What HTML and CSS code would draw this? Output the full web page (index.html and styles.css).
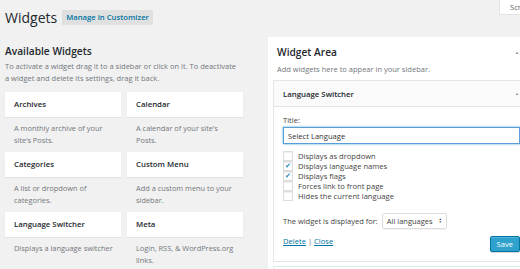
FILE: index.html
```html
<!DOCTYPE html>
<html>
<head>
<meta charset="utf-8">
<link rel="stylesheet" href="styles.css">
</head>
<body>
<div class="page">
  <header class="topbar">
    <h1 class="page-title">Widgets</h1>
    <a class="title-action" href="#">Manage in Customizer</a>
    <button class="screen-opts">Screen Options</button>
  </header>
  <div class="columns">
    <section class="available">
      <h2 class="section-title">Available Widgets</h2>
      <p class="section-desc">To activate a widget drag it to a sidebar or click on it. To deactivate a widget and delete its settings, drag it back.</p>
      <div class="widget-grid">
        <div class="widget-item"><div class="widget-card">Archives</div><p class="widget-desc">A monthly archive of your site’s Posts.</p></div>
        <div class="widget-item"><div class="widget-card">Calendar</div><p class="widget-desc">A calendar of your site’s Posts.</p></div>
        <div class="widget-item"><div class="widget-card">Categories</div><p class="widget-desc">A list or dropdown of categories.</p></div>
        <div class="widget-item"><div class="widget-card">Custom Menu</div><p class="widget-desc">Add a custom menu to your sidebar.</p></div>
        <div class="widget-item"><div class="widget-card">Language Switcher</div><p class="widget-desc">Displays a language switcher</p></div>
        <div class="widget-item"><div class="widget-card">Meta</div><p class="widget-desc">Login, RSS, &amp; WordPress.org links.</p></div>
      </div>
    </section>
    <section class="sidebar">
      <div class="sidebar-head">
        <h2 class="section-title">Widget Area</h2>
        <span class="toggle">&#9650;</span>
      </div>
      <p class="sidebar-desc">Add widgets here to appear in your sidebar.</p>
      <div class="widget-box">
        <div class="widget-box-head">
          <span class="widget-box-title">Language Switcher</span>
          <span class="toggle">&#9650;</span>
        </div>
        <div class="widget-box-body">
          <label class="field-label">Title:</label>
          <input class="text-input" type="text" value="Select Language">
          <ul class="check-list">
            <li><span class="cb"></span>Displays as dropdown</li>
            <li><span class="cb checked">&#10004;</span>Displays language names</li>
            <li><span class="cb checked">&#10004;</span>Displays flags</li>
            <li><span class="cb"></span>Forces link to front page</li>
            <li><span class="cb"></span>Hides the current language</li>
          </ul>
          <div class="display-row">
            <span>The widget is displayed for:</span>
            <span class="select">All languages <span class="updown">&#9650;<br>&#9660;</span></span>
          </div>
          <div class="actions">
            <span class="links"><a href="#">Delete</a> <span class="sep">|</span> <a href="#">Close</a></span>
            <button class="save">Save</button>
          </div>
        </div>
      </div>
      <div class="widget-box next"></div>
    </section>
  </div>
</div>
</body>
</html>
```

FILE: styles.css
```css
html, body {
  margin: 0;
  padding: 0;
  background: #f1f1f1;
  overflow: hidden;
}
body {
  width: 520px;
  height: 269px;
  font-family: "Open Sans", "Noto Sans", sans-serif;
  color: #444;
}
.page {
  width: 600px;
}
.topbar {
  display: flex;
  align-items: flex-start;
  padding-left: 5px;
  height: 37px;
}
.page-title {
  margin: 8px 0 0 0;
  font-size: 14px;
  font-weight: 400;
  line-height: 19px;
  color: #23282d;
}
.title-action {
  margin: 10px 0 0 5px;
  background: #e0e0e0;
  color: #0074a2;
  font-size: 7.7px;
  font-weight: 600;
  line-height: 15px;
  padding: 0 4px;
  text-decoration: none;
  border-radius: 1px;
}
.screen-opts {
  margin: 0 30px 0 auto;
  background: #fff;
  border: none;
  box-shadow: 0 0 0 1px rgba(0,0,0,.05);
  font-family: inherit;
  font-size: 7.6px;
  color: #666;
  height: 14px;
  padding: 0 0 0 10px;
  width: 70px;
  text-align: left;
  white-space: nowrap;
}
.columns {
  display: flex;
  align-items: flex-start;
}
.available {
  width: 238px;
  margin-left: 5px;
}
.section-title {
  margin: 0;
  font-size: 10.2px;
  font-weight: 600;
  line-height: 16px;
  color: #23282d;
}
.available .section-title {
  margin-top: 6px;
}
.section-desc {
  margin: 1px 0 0;
  font-size: 7.5px;
  line-height: 12px;
  color: #72777c;
  width: 237px;
}
.widget-grid {
  display: grid;
  grid-template-columns: 116px 116px;
  column-gap: 6px;
  margin-top: 8px;
}
.widget-item {
  height: 60px;
}
.widget-card {
  background: #fff;
  height: 25px;
  line-height: 25px;
  padding-left: 9px;
  font-size: 7.8px;
  font-weight: 600;
  color: #23282d;
  box-shadow: 0 1px 1px rgba(0,0,0,.05);
}
.widget-desc {
  margin: 5px 0 0 9px;
  font-size: 7.4px;
  line-height: 12px;
  color: #72777c;
  width: 100px;
}
.sidebar {
  margin-left: 25px;
  width: 257px;
  background: #fff;
  box-shadow: 0 1px 1px rgba(0,0,0,.05);
  padding: 0 5px 6px 5px;
}
.sidebar-head {
  display: flex;
  justify-content: space-between;
  align-items: center;
  padding: 7px 0 0 4px;
}
.toggle {
  font-size: 4px;
  color: #888;
  margin-right: 11px;
}
.widget-box-head .toggle {
  margin-right: 10px;
}
.sidebar-desc {
  margin: 3px 0 0 4px;
  font-size: 7.5px;
  line-height: 12px;
  color: #72777c;
}
.widget-box {
  margin-top: 5px;
  border: 1px solid #e5e5e5;
  background: #fff;
}
.widget-box-head {
  display: flex;
  justify-content: space-between;
  align-items: center;
  height: 25px;
  padding-left: 9px;
  background: #fafafa;
  border-bottom: 1px solid #e5e5e5;
}
.widget-box-title {
  font-size: 7.8px;
  font-weight: 600;
  color: #23282d;
}
.widget-box-body {
  padding: 7px 9px 9px 9px;
}
.field-label {
  display: block;
  font-size: 7.6px;
  line-height: 12px;
  color: #444;
}
.text-input {
  display: block;
  box-sizing: border-box;
  width: 237px;
  height: 17px;
  margin: 1px 0 0 0;
  padding: 0 4px;
  border: 1px solid #5b9dd9;
  box-shadow: 0 0 2px rgba(30,140,190,.8);
  font-family: inherit;
  font-size: 7.6px;
  color: #333;
  outline: none;
}
.check-list {
  list-style: none;
  margin: 7px 0 0 0;
  padding: 0;
}
.check-list li {
  display: flex;
  align-items: center;
  height: 10px;
  font-size: 7.6px;
  color: #444;
}
.cb {
  box-sizing: border-box;
  width: 10px;
  height: 10px;
  border: 1px solid #ddd;
  background: #fff;
  margin-right: 5px;
  font-size: 7px;
  line-height: 8px;
  color: #1e8cbe;
  text-align: center;
  box-shadow: inset 0 1px 1px rgba(0,0,0,.07);
}
.display-row {
  display: flex;
  align-items: center;
  margin-top: 12px;
  font-size: 7.5px;
  color: #444;
}
.select {
  margin-left: 4px;
  height: 16px;
  box-sizing: border-box;
  border: 1px solid #ddd;
  border-radius: 2px;
  padding: 0 4px;
  display: flex;
  align-items: center;
  gap: 6px;
  box-shadow: 0 1px 1px rgba(0,0,0,.05);
}
.updown {
  font-size: 3px;
  line-height: 3px;
  color: #333;
}
.actions {
  display: flex;
  justify-content: space-between;
  align-items: flex-start;
  margin-top: 6px;
  font-size: 7.6px;
}
.links {
  line-height: 12px;
}
.actions a {
  color: #0074a2;
}
.sep {
  color: #666;
}
.save {
  height: 16px;
  margin-top: 1px;
  padding: 0 6px;
  background: #2ea2cc;
  border: 1px solid #0074a2;
  border-radius: 2px;
  color: #fff;
  font-family: inherit;
  font-size: 7.6px;
  box-shadow: inset 0 1px 0 rgba(120,200,230,.5), 0 1px 0 rgba(0,0,0,.15);
}
.widget-box.next {
  height: 20px;
  margin-top: 4px;
}
```
